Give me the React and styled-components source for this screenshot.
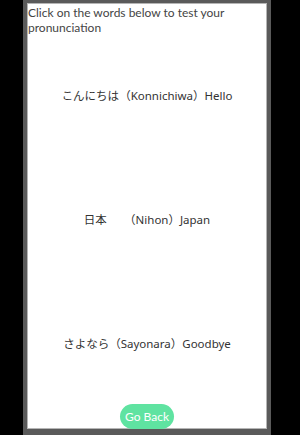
import React from "react";
import styled, { createGlobalStyle } from "styled-components";

const GlobalStyle = createGlobalStyle`
  html, body {
    margin: 0;
    padding: 0;
    background: #000;
  }
  body {
    font-family: "Noto Sans", "Noto Sans CJK JP", sans-serif;
  }
`;

const words = [
  { jp: "こんにちは", romaji: "Konnichiwa", en: "Hello" },
  { jp: "日本　　", romaji: "Nihon", en: "Japan" },
  { jp: "さよなら", romaji: "Sayonara", en: "Goodbye" },
];

const App = () => {
  return (
    <>
      <GlobalStyle />
      <Frame>
        <Screen>
          <Heading>Click on the words below to test your pronunciation</Heading>
          <WordList>
            {words.map((w) => (
              <WordRow key={w.romaji}>
                <Word>
                  {w.jp}（{w.romaji}）{w.en}
                </Word>
              </WordRow>
            ))}
          </WordList>
          <BackButton>Go Back</BackButton>
        </Screen>
      </Frame>
    </>
  );
};

const Frame = styled.div`
  margin-left: 23px;
  width: 248px;
  height: 435px;
  box-sizing: border-box;
  border: 4px solid #5a5a5a;
  border-top-width: 3px;
  border-bottom-width: 6px;
  background: #fff;
  overflow: hidden;
`;

const Screen = styled.div`
  height: 100%;
  box-shadow: inset 0 0 0 1px #b5b5b5;
  display: flex;
  flex-direction: column;
  align-items: stretch;
`;

const Heading = styled.p`
  margin: 0;
  padding: 2px 0 0 1px;
  height: 28px;
  color: #444;
  font-family: "Lato", "Noto Sans", sans-serif;
  font-size: 12px;
  line-height: 15px;
`;

const WordList = styled.div`
  display: flex;
  flex-direction: column;
`;

const WordRow = styled.div`
  height: 124px;
  display: flex;
  align-items: center;
  justify-content: center;
`;

const Word = styled.span`
  color: #333;
  font-size: 11.5px;
  cursor: pointer;
`;

const BackButton = styled.button`
  align-self: center;
  margin-top: -1px;
  height: 25px;
  padding: 0 5px;
  border: none;
  border-radius: 13px;
  background: #5fe3a1;
  color: #fff;
  font-family: "Lato", "Noto Sans", sans-serif;
  font-size: 12px;
  cursor: pointer;
`;

export default App;
